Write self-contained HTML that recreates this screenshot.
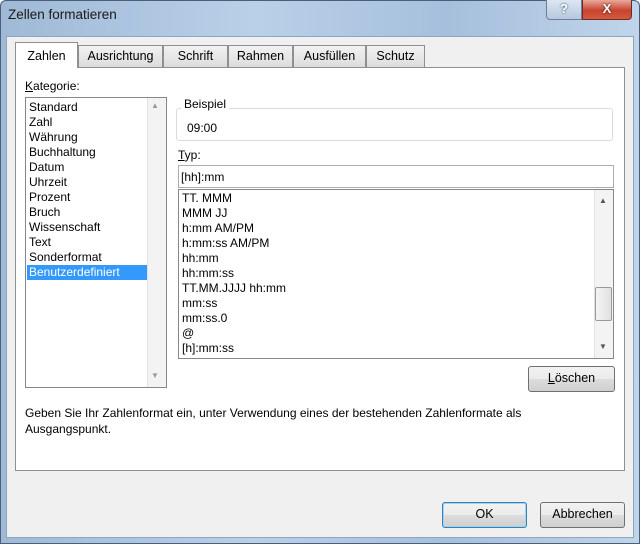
<!DOCTYPE html>
<html><head><meta charset="utf-8"><style>
*{margin:0;padding:0;box-sizing:border-box}
body{width:640px;height:544px;overflow:hidden;font-family:"Liberation Sans",sans-serif;font-size:12px;color:#000;background:#fff}
.win{position:absolute;left:0;top:0;width:640px;height:544px;background:linear-gradient(90deg,#9fb9d6,#b9d0e8 40%,#a6bfdc 70%,#c0d5ea);box-shadow:inset 0 0 0 1px #4a5f7a;border-radius:6px 6px 0 0}
.a{position:absolute}
.client{left:6px;top:36px;width:628px;height:502px;background:#f0f0f0;border:1px solid #8ea4bf}
.panel{left:15px;top:67px;width:610px;height:404px;background:#fff;border:1px solid #8e8f8f}
.tab{top:45px;height:22px;background:linear-gradient(#f2f2f2,#dcdcdc);border:1px solid #8e8f8f;border-bottom:none;text-align:center;line-height:21px;font-size:12.5px}
.box{background:#fff;border:1px solid #828790}
.sb{background:#f3f3f3;border-left:1px solid #e2e2e2}
.btn{border:1px solid #707070;border-radius:3px;background:linear-gradient(#f2f2f2,#ebebeb 50%,#dddddd 50%,#cfcfcf);text-align:center;line-height:23px;font-size:12.5px}
.li{line-height:15px;font-size:12px}
</style></head><body>
<div class="win">
<div class="a" style="left:8px;top:7px;font-size:13.5px;color:#1a1a1a">Zellen formatieren</div>
<div class="a" style="left:546px;top:0;width:36px;height:20px;border:1px solid #6d7f96;border-top:none;border-radius:0 0 0 4px;background:linear-gradient(#dce7f3,#b6c8de);text-align:center;color:#fff;font-weight:bold;font-size:13px;line-height:18px;text-shadow:0 0 2px #234">?</div>
<div class="a" style="left:582px;top:0;width:50px;height:20px;border:1px solid #6b2a22;border-top:none;border-radius:0 0 4px 0;background:linear-gradient(#e9a99c,#c8442f 55%,#d45a3e);text-align:center;color:#fff;font-weight:bold;font-size:13px;line-height:18px;text-shadow:0 0 2px #300">X</div>
<div class="a client"></div>
<div class="a panel"></div>
<div class="a tab" style="left:15px;top:42px;height:26px;width:63px;background:#fff;line-height:27px">Zahlen</div>
<div class="a tab" style="left:78px;width:85px">Ausrichtung</div>
<div class="a tab" style="left:163px;width:65px">Schrift</div>
<div class="a tab" style="left:228px;width:65px">Rahmen</div>
<div class="a tab" style="left:293px;width:73px">Ausfüllen</div>
<div class="a tab" style="left:366px;width:59px">Schutz</div>
<div class="a" style="left:25px;top:79px"><u>K</u>ategorie:</div>
<div class="a box" style="left:25px;top:97px;width:142px;height:291px"></div>
<div class="a sb" style="left:147px;top:98px;width:19px;height:289px"></div>
<div class="a" style="left:151px;top:101px;font-size:8px;color:#999">▲</div>
<div class="a" style="left:151px;top:371px;font-size:8px;color:#999">▼</div>
<div class="a" style="left:27px;top:265px;width:120px;height:15px;background:#3399ff"></div>
<div class="a li" style="left:29px;top:100px">Standard<br>Zahl<br>Währung<br>Buchhaltung<br>Datum<br>Uhrzeit<br>Prozent<br>Bruch<br>Wissenschaft<br>Text<br>Sonderformat<br><span style="color:#fff">Benutzerdefiniert</span></div>
<div class="a" style="left:176px;top:108px;width:437px;height:33px;border:1px solid #dcdcdc;border-radius:3px"></div>
<div class="a" style="left:181px;top:97px;background:#fff;padding:0 3px">Beispiel</div>
<div class="a" style="left:187px;top:121px">09:00</div>
<div class="a" style="left:178px;top:148px"><u>T</u>yp:</div>
<div class="a box" style="left:178px;top:165px;width:436px;height:23px;border-color:#abadb3"></div>
<div class="a" style="left:181px;top:170px">[hh]:mm</div>
<div class="a box" style="left:178px;top:189px;width:436px;height:170px"></div>
<div class="a sb" style="left:594px;top:190px;width:19px;height:168px"></div>
<div class="a" style="left:595px;top:287px;width:17px;height:34px;border:1px solid #9a9a9a;border-radius:2px;background:linear-gradient(90deg,#f4f4f4,#e0e0e0)"></div>
<div class="a" style="left:599px;top:196px;font-size:8px;color:#555">▲</div>
<div class="a" style="left:599px;top:342px;font-size:8px;color:#555">▼</div>
<div class="a li" style="left:182px;top:191px">TT. MMM<br>MMM JJ<br>h:mm AM/PM<br>h:mm:ss AM/PM<br>hh:mm<br>hh:mm:ss<br>TT.MM.JJJJ hh:mm<br>mm:ss<br>mm:ss.0<br>@<br>[h]:mm:ss</div>
<div class="a btn" style="left:528px;top:366px;width:87px;height:26px"><u>L</u>öschen</div>
<div class="a" style="left:25px;top:405px;line-height:16px">Geben Sie Ihr Zahlenformat ein, unter Verwendung eines der bestehenden Zahlenformate als<br>Ausgangspunkt.</div>
<div class="a btn" style="left:442px;top:502px;width:85px;height:26px;border-color:#3c7fb1;box-shadow:inset 0 0 0 1px #9fd4f3">OK</div>
<div class="a btn" style="left:540px;top:502px;width:85px;height:26px">Abbrechen</div>
</div>
</body></html>
